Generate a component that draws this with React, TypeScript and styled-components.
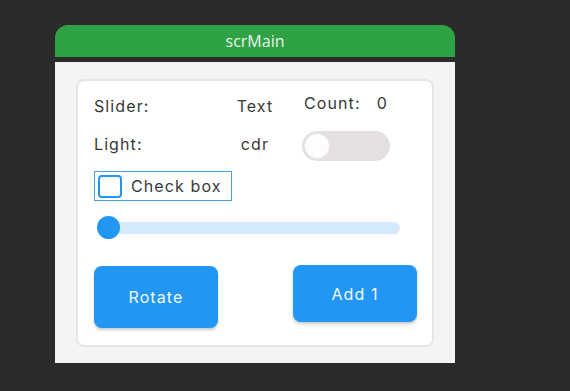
import React from "react";
import styled, { createGlobalStyle } from "styled-components";

const Global = createGlobalStyle`
  html, body { margin: 0; padding: 0; background: #2b2b2b; }
  body { width: 570px; height: 391px; overflow: hidden; }
`;

const Page = styled.div`
  padding: 25px 0 0 55px;
  display: flex;
  flex-direction: column;
  width: 400px;
`;

const TitleBar = styled.div`
  height: 32px;
  background: #2ea244;
  border-radius: 13px 13px 0 0;
  display: flex;
  align-items: center;
  justify-content: center;
  color: #e9f6ea;
  font-family: "Open Sans", "Noto Sans", sans-serif;
  font-size: 16px;
`;

const Screen = styled.div`
  margin-top: 5px;
  height: 301px;
  background: #f4f4f4;
  padding: 17px 21px 0 21px;
  box-sizing: border-box;
`;

const Card = styled.div`
  height: 268px;
  box-sizing: border-box;
  background: #ffffff;
  border: 2px solid #e6e6e6;
  border-radius: 8px;
  padding: 12px 15px 0 16px;
  display: flex;
  flex-direction: column;
  font-family: "Inter", "Liberation Sans", sans-serif;
  font-size: 16px;
  letter-spacing: 1.1px;
  color: #383838;
`;

const Row = styled.div<{ $h: number; $mt: number }>`
  display: grid;
  grid-template-columns: 128px 66px 1fr;
  column-gap: 0;
  height: ${(p) => p.$h}px;
  margin-top: ${(p) => p.$mt}px;
  align-items: start;
`;

const Label = styled.span<{ $top?: number; $center?: boolean }>`
  line-height: 20px;
  margin-top: ${(p) => p.$top ?? 0}px;
  text-align: ${(p) => (p.$center ? "center" : "left")};
  white-space: pre;
`;

const Counter = styled.div`
  display: flex;
  gap: 16px;
  padding-left: 16px;
  line-height: 20px;
`;

const Switch = styled.div`
  margin-left: 14px;
  width: 88px;
  height: 30px;
  border-radius: 15px;
  background: #e3dfe2;
  display: flex;
  align-items: center;
  padding-left: 2px;
  box-sizing: border-box;
`;

const Knob = styled.div`
  width: 26px;
  height: 26px;
  border-radius: 50%;
  background: #fdfdfd;
  border: 1px solid #ebe8ea;
  box-sizing: border-box;
`;

const CheckWrap = styled.label`
  margin-top: 10px;
  width: 138px;
  height: 30px;
  box-sizing: border-box;
  border: 1px solid #4d9fe4;
  display: flex;
  align-items: center;
  gap: 9px;
  padding-left: 3px;
`;

const Box = styled.span`
  width: 24px;
  height: 23px;
  box-sizing: border-box;
  border: 2px solid #2196f3;
  border-radius: 4px;
  background: #fff;
`;

const SliderWrap = styled.div`
  margin-top: 15px;
  margin-left: 3px;
  width: 303px;
  height: 23px;
  position: relative;
  display: flex;
  align-items: center;
`;

const Track = styled.div`
  width: 100%;
  height: 12px;
  border-radius: 6px;
  background: #d5e9fc;
`;

const Thumb = styled.div`
  position: absolute;
  left: 0;
  top: 0;
  width: 23px;
  height: 23px;
  border-radius: 50%;
  background: #2196f3;
`;

const Buttons = styled.div`
  margin-top: 26px;
  display: flex;
  justify-content: space-between;
  align-items: flex-start;
`;

const Button = styled.button<{ $h: number; $mt: number }>`
  width: 124px;
  height: ${(p) => p.$h}px;
  margin-top: ${(p) => p.$mt}px;
  border: none;
  border-radius: 8px;
  background: #2196f3;
  color: #f4f9ff;
  font-family: "Inter", "Liberation Sans", sans-serif;
  font-size: 16px;
  letter-spacing: 1.1px;
  box-shadow: 0 2px 3px rgba(0, 0, 0, 0.22);
  padding: 0;
`;

export default function App() {
  return (
    <>
      <Global />
      <Page>
        <TitleBar>scrMain</TitleBar>
        <Screen>
          <Card>
            <Row $h={23} $mt={0}>
              <Label $top={3}>Slider:</Label>
              <Label $top={3} $center>Text</Label>
              <Counter>
                <span>Count:</span>
                <span>0</span>
              </Counter>
            </Row>
            <Row $h={30} $mt={15}>
              <Label $top={3}>Light:</Label>
              <Label $top={3} $center>cdr</Label>
              <Switch>
                <Knob />
              </Switch>
            </Row>
            <CheckWrap>
              <Box />
              <span>Check box</span>
            </CheckWrap>
            <SliderWrap>
              <Track />
              <Thumb />
            </SliderWrap>
            <Buttons>
              <Button $h={62} $mt={1}>Rotate</Button>
              <Button $h={57} $mt={0}>Add 1</Button>
            </Buttons>
          </Card>
        </Screen>
      </Page>
    </>
  );
}
